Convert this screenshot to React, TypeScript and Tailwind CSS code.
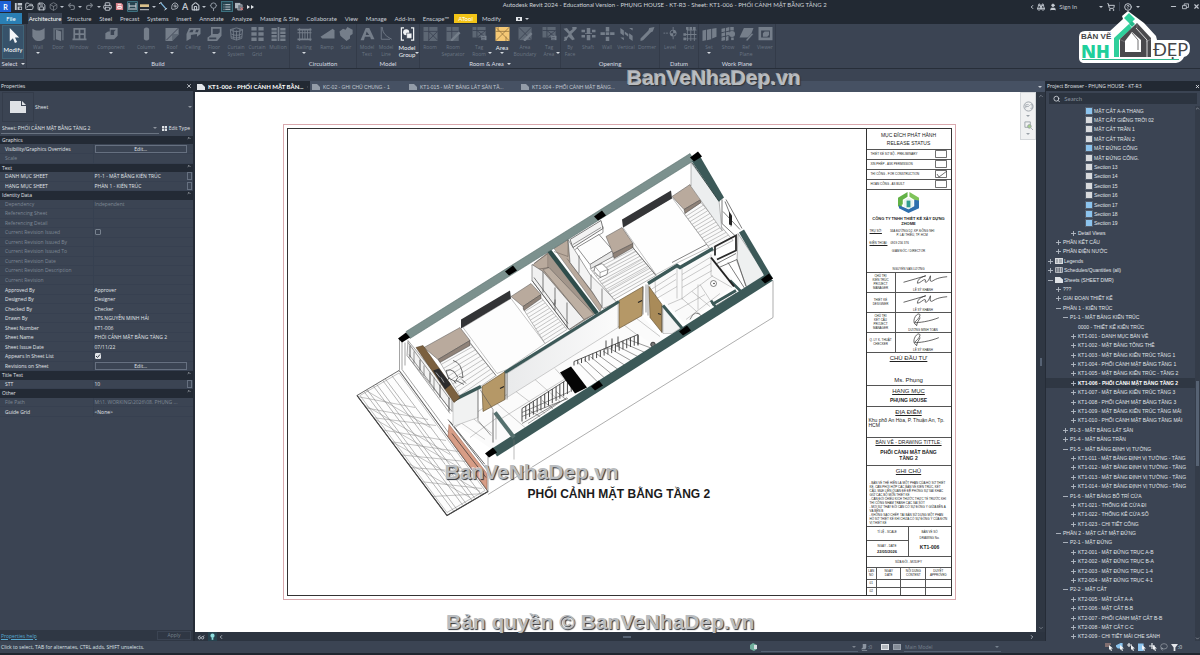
import React from "react";
import {
  Binoculars, Box, ChevronDown, ChevronLeft, ChevronRight, ChevronUp, CircleHelp, FolderOpen, House, Lasso, List,
  MapPin, Minus, Printer, Redo2, Save, Search, ShoppingCart, Undo2, User, X,
} from "lucide-react";

/* ---------- ribbon glyphs, 16x16 ---------- */
const G: Record<string, React.ReactNode> = {
  modify: <path d="M4 0v14l3.400-3.200L9.500 16l2.300-1-2.200-4.800H14z" fill="#f4f6f8" />,
  wall: <path d="M1 2c5 3 9 3 14-1v12c-4 4-9 4-12 1L1 11z" />,
  door: <><path d="M2 1h12v14h-2V3H4v12H2z" opacity=".6" /><path d="M5 3l6 2v11l-6-2z" /></>,
  window: <path fillRule="evenodd" d="M1 1h14v12h1v2H0v-2h1zM3 3v4h4V3zm6 0v4h4V3zM3 9v4h4V9zm6 0v4h4V9z" />,
  component: <path d="M6 1h9v9l-4 4H1V7l3-2h2zM7 3v6h4V5l2-2z" fillRule="evenodd" />,
  column: <path d="M5 2q3-3 6 0v12q-3 3-6 0z" />,
  roof: <><path d="M0 1h15v7H8v8H0z" /><path d="M15 1L1 15" stroke="#3b4453" /><path d="M8 8h8l-8 8z" opacity=".6" /></>,
  ceiling: <path fillRule="evenodd" d="M3 1h13v7l-4 3v-3L5 9v4l-5 3V8zM5 3L3 6h4l1-3zm6 0l-1 3h3l1-3z" />,
  floor: <path fillRule="evenodd" d="M4 0h12v10l-5 6H0v-4l4-3zM6 2v6h6l2-2V2zM2 12v2h8v-2z" />,
  csystem: <path d="M1 3l7-2 7 2-1 10-6 2-6-2zM1 3c4 3 10 3 14 0M4 2l1 12M8 4v11M12 2l-1 12M2 8c4 2 8 2 12 0M2 11c4 2 8 2 12 0" fill="none" stroke="currentColor" />,
  cgrid: <path d="M1 0h6v4H1zM9 0h6v4H9zM1 6h6v4H1zM9 6h6v4H9zM1 12h6v4H1zM9 12h6v4H9z" />,
  mullion: <path d="M0 1h6v3H0zM10 1h6v3h-6zM0 5h6v3H0zM10 5h6v3h-6zM0 9h6v3H0zM10 9h6v3h-6zM0 13h6v3H0zM10 13h6v3h-6zM7 0h2v16H7z" />,
  railing: <path d="M0 2h16v2H0zM0 6h16v1H0zM0 13h16v2H0zM2 1h1v15H2zM5 4h1v10H5zM8 4h1v10H8zM11 4h1v10h-1zM14 1h1v15h-1z" />,
  ramp: <path d="M0 11L14 2l2 2v9H2z" />,
  stair: <path d="M0 5l4-3 3 1 2-3 6 3v5l-3 2v3l-4 3-7-6z" />,
  mtext: <path fillRule="evenodd" d="M6 1h4l6 13h-4l-1-3H5l-1 4H0zM7 5L6 9h4z" />,
  mline: <path d="M2 0v14h10M3 0c1 8 4 10 11 14" fill="none" stroke="currentColor" />,
  mgroup: <><path d="M4 1H1v14h3M12 1h3v14h-3" fill="none" stroke="#f1f3f5" strokeWidth="1.4" /><circle cx="6.5" cy="6" r="3.5" fill="#f1f3f5" /><path d="M7 7h6v6H7z" fill="#f1f3f5" stroke="#3b4453" strokeWidth=".7" /></>,
  room: <><path d="M0 0h16v16H0z" opacity=".6" /><path d="M0 5h16M6 0v16M6 5l10 10M16 5L6 15" stroke="#3b4453" fill="none" /></>,
  roomsep: <><path d="M0 0h14v16H0z" opacity=".6" /><path d="M0 5h14M6 0v16" stroke="#3b4453" /><path d="M5 14l9-9 2 2-9 9H5z" /></>,
  tag: <><path d="M0 0h15v12H0z" opacity=".6" /><path d="M0 4h15M5 0v12M5 4l10 8M15 4L5 12" stroke="#3b4453" fill="none" /><path d="M10 10h6v5h-6z" /><path d="M11 12h3M11 14h3" stroke="#3b4453" strokeWidth=".6" /></>,
  area: <><path d="M0 0h16v16H0z" fill="#f5c875" /><path d="M0 0l16 16M16 0L0 16M0 5h16M3 0v5M12 11v5" stroke="#8b6b38" strokeWidth=".8" fill="none" /></>,
  boundary: <><path d="M0 0h15v15H0z" opacity=".6" /><path d="M0 0l15 15M15 0L0 15" stroke="#3b4453" /><path d="M6 14l8-8 2 2-8 8H6z" /></>,
  face: <path d="M0 2l4-1 3 4 5-4 3 1-6 6 4 6-3 1-4-4-4 5H0l6-8zM10 0h5v2h-5zM1 11h3v4H1z" />,
  shaft: <path d="M0 3h4v3H0zM6 1h4v6H6zM12 3h4v3h-4zM0 9h4v3H0zM6 9h4v6H6zM12 9h4v3h-4zM4 7h8v1H4z" />,
  owall: <path d="M6 0h4v5H6zM0 6h5v3H0zM6 6h4v3H6zM11 6h5v3h-5zM6 11h4v5H6z" />,
  vertical: <path d="M1 1l4 3v6L1 7zM6 5l4 3v3L6 8zM11 7l4 3v6l-4-3zM11 1h4v3zM1 12h4v3z" />,
  dormer: <path d="M0 13l9-9 1-3 6-1-2 5-2 1-9 9-3 1z" />,
  level: <><path d="M0 7h6" stroke="currentColor" strokeDasharray="2 1" /><circle cx="11" cy="7" r="3.5" fill="none" stroke="currentColor" /><path d="M11 3.500v7A3.500 3.500 0 0 1 7.500 7h7A3.500 3.500 0 0 0 11 3.500zM10.500 0h1v3h-1zM10.500 11h1v3h-1z" /></>,
  grid: <path d="M5 3h11v1H5zM3 8h13v1H3zM3 13h13v1H3zM5 4h1v12H5zM9 2h1v14H9zM13 2h1v14h-1zM1 7h3v3H1zM1 12h3v3H1zM4 0h3v3H4zM8 0h3v3H8zM12 0h3v3h-3z" />,
  set: <path d="M0 4l4-1v12l-4 1zM5 3l5-1v12l-5 1zM11 2l5-1v10l-5 2z" />,
  show: <><path d="M0 2l4-1v4L0 6zM5 1l4-1v4L5 5zM10 0h4v4h-4zM0 7l4-1v4l-4 1zM5 6l4-1v4l-4 1zM0 12l4-1v4l-4 1zM5 11l3-1v5l-3 1z" /><circle cx="12" cy="8" r="3.500" /><path d="M11 12h3v3h-3z" /></>,
  refp: <><path d="M5 1h11l-4 11H0z" /><path d="M7 15l7-8 2 1-7 8z" stroke="#3b4453" strokeWidth=".5" /></>,
  viewer: <path fillRule="evenodd" d="M0 0h16v15H0zM3 4v8h10V4zM5 7l2-2h5v4l-2 2H5z" />,
};

type Tool = { g: string; w: string; t: string[]; on?: boolean; arrow?: boolean };
type Panel = { name: string; menu?: boolean; tools: Tool[] };
const panels: Panel[] = [
  { name: "Build", tools: [
    { g: "wall", w: "w-[22px]", t: ["Wall"], arrow: true }, { g: "door", w: "w-[18px]", t: ["Door"] },
    { g: "window", w: "w-6", t: ["Window"] }, { g: "component", w: "w-10", t: ["Component"], arrow: true },
    { g: "column", w: "w-[30px]", t: ["Column"], arrow: true }, { g: "roof", w: "w-[22px]", t: ["Roof"], arrow: true },
    { g: "ceiling", w: "w-5", t: ["Ceiling"] }, { g: "floor", w: "w-[22px]", t: ["Floor"], arrow: true },
    { g: "csystem", w: "w-[22px]", t: ["Curtain", "System"] }, { g: "cgrid", w: "w-5", t: ["Curtain", "Grid"] },
    { g: "mullion", w: "w-[22px]", t: ["Mullion"] } ] },
  { name: "Circulation", tools: [
    { g: "railing", w: "w-7", t: ["Railing"], arrow: true }, { g: "ramp", w: "w-[18px]", t: ["Ramp"] },
    { g: "stair", w: "w-5", t: ["Stair"] } ] },
  { name: "Model", tools: [
    { g: "mtext", w: "w-5", t: ["Model", "Text"] }, { g: "mline", w: "w-[18px]", t: ["Model", "Line"] },
    { g: "mgroup", w: "w-6", t: ["Model", "Group"], on: true, arrow: true } ] },
  { name: "Room & Area", menu: true, tools: [
    { g: "room", w: "w-5", t: ["Room"] }, { g: "roomsep", w: "w-[26px]", t: ["Room", "Separator"] },
    { g: "tag", w: "w-[26px]", t: ["Tag", "Room"], arrow: true }, { g: "area", w: "w-5", t: ["Area"], on: true, arrow: true },
    { g: "boundary", w: "w-[26px]", t: ["Area", "Boundary"] }, { g: "tag", w: "w-[22px]", t: ["Tag", "Area"], arrow: true } ] },
  { name: "Opening", tools: [
    { g: "face", w: "w-[18px]", t: ["By", "Face"] }, { g: "shaft", w: "w-[18px]", t: ["Shaft"] },
    { g: "owall", w: "w-5", t: ["Wall"] }, { g: "vertical", w: "w-[18px]", t: ["Vertical"] },
    { g: "dormer", w: "w-6", t: ["Dormer"] } ] },
  { name: "Datum", tools: [
    { g: "level", w: "w-5", t: ["Level"] }, { g: "grid", w: "w-[18px]", t: ["Grid"] } ] },
  { name: "Work Plane", tools: [
    { g: "set", w: "w-5", t: ["Set"], arrow: true }, { g: "show", w: "w-[18px]", t: ["Show"] },
    { g: "refp", w: "w-[18px]", t: ["Ref", "Plane"] }, { g: "viewer", w: "w-5", t: ["Viewer"] } ] },
];

const Caret = ({ className = "" }: { className?: string }) => (
  <svg viewBox="0 0 4 2" className={"h-[2px] w-1 shrink-0 " + className} fill="currentColor"><path d="M0 0h4L2 2z" /></svg>
);

function ToolButton({ tool }: { tool: Tool }) {
  return (
    <button className={"relative flex flex-col items-center whitespace-nowrap leading-[7px] " + tool.w + (tool.on ? " text-[#eef1f4]" : " font-['Open_Sans',sans-serif] text-[5px] text-[#6a7482]")}>
      <svg viewBox="0 0 16 16" className="mb-[3px] h-[14px] w-[15px]" fill="#757e8a" color="#757e8a">{G[tool.g]}</svg>
      {tool.t.map((l) => <span key={l}>{l}</span>)}
      {tool.arrow && tool.t.length === 1 && <Caret className="mt-[1px] text-[#d5dae0]" />}
      {tool.arrow && tool.t.length > 1 && <Caret className="absolute right-0 bottom-[6px] text-[#d5dae0]" />}
    </button>
  );
}

function Ribbon() {
  return (
    <div className="flex h-[45px] shrink-0 border-b border-[#272e39] bg-[#3b4453]">
      <div className="flex w-[27px] shrink-0 flex-col items-center border-r border-[#333b49]">
        <button className="mt-[1px] flex h-[34px] w-[22px] flex-col items-center border border-[#3f6478] bg-[#37526a] pt-[2px] text-white">
          <svg viewBox="0 0 16 16" className="mb-[3px] h-[15px] w-[15px]">{G.modify}</svg>
          <span className="leading-[7px]">Modify</span>
        </button>
        <button className="flex items-center gap-[3px] leading-[9px] text-[#d9dde2]">Select <Caret /></button>
      </div>
      {panels.map((p) => (
        <div key={p.name} className="flex shrink-0 flex-col border-r border-[#333b49] pt-[3px]">
          <div className="flex h-[33px]">{p.tools.map((t, i) => <ToolButton key={i} tool={t} />)}</div>
          <div className="flex items-center justify-center gap-[3px] leading-[8px] text-[#d9dde2]">{p.name}{p.menu && <Caret />}</div>
        </div>
      ))}
    </div>
  );
}

const menuTabs = ["Structure", "Steel", "Precast", "Systems", "Insert", "Annotate", "Analyze", "Massing & Site", "Collaborate", "View", "Manage", "Add-Ins", "Enscape™"];

const Arr = () => <Caret className="text-[#b9c0c9]" />;

function TitleBar() {
  const s = "h-[9px] w-[9px] shrink-0";
  return (
    <header className="flex h-[13px] shrink-0 items-center justify-between bg-[#222933] text-[#c0c6ce]">
      <div className="flex w-[256px] items-center justify-between pr-[2px]">
        <span className="flex h-[11px] w-[11px] items-center justify-center bg-[#1f62d6] text-[7px] font-bold text-white">R</span>
        <svg viewBox="0 0 10 10" className={s} fill="#c0c6ce"><path fillRule="evenodd" d="M1 1h2v8H1zM4 1h5v3H4zM4 5h5v4H4zM6 6v2h2V6z" /></svg>
        <FolderOpen className={s} strokeWidth={2.5} /><Save className={s} strokeWidth={2.5} />
        <Box className={s + " opacity-60"} /><Arr />
        <Undo2 className={s + " opacity-50"} strokeWidth={3} /><Arr />
        <Redo2 className={s + " opacity-50"} strokeWidth={3} /><Arr />
        <Printer className={s} strokeWidth={2.5} />
        <svg viewBox="0 0 10 10" className={s}><path d="M1 1h6l2 2v6H1z" fill="#d9848b" /><path d="M3 3h4M3 5h4v2H3z" stroke="#fff" fill="none" /></svg>
        <svg viewBox="0 0 11 11" className="h-[11px] w-[11px]"><path d="M.5.500h10v10H.5z" fill="#27434f" stroke="#3d7180" /><path d="M2 2v7M9 2v7M2 5h7M3 8h5" stroke="#d9dde2" /></svg>
        <svg viewBox="0 0 10 8" className="h-[8px] w-[9px]"><path d="M0 1h10v3H0z" fill="#d9c08b" /><path d="M0 7h10" stroke="#d9dde2" /></svg><Arr />
        <svg viewBox="0 0 10 10" className={s}><path d="M2 1l6 7" stroke="#7fb8dd" strokeWidth="1.400" /><path d="M0 2l3-2M6 9l3-2" stroke="#d9dde2" /></svg>
        <MapPin className={s + " rotate-45"} />
        <span className="text-[9px] font-bold leading-[9px]">A</span>
        <House className={s} strokeWidth={3} /><Arr />
        <svg viewBox="0 0 10 10" className={s} fill="none" stroke="#9aa3ae"><circle cx="5" cy="4" r="3" /><path d="M5 7v3M1 4h1M8 4h1" /></svg>
        <span className="flex h-[11px] w-[12px] items-center justify-center border border-[#3d7180] bg-[#27434f]"><List className="h-[8px] w-[8px]" strokeWidth={3} /></span>
        <svg viewBox="0 0 10 10" className={s}><path d="M0 1h6v6H0z" fill="#aab1ba" /><path d="M3 3h5v6H3z" fill="#6d7682" stroke="#c9ced5" strokeWidth=".6" /><path d="M6 6l3 3M9 6L6 9" stroke="#e27070" /></svg>
        <svg viewBox="0 0 7 6" className="h-[6px] w-[7px] shrink-0" fill="#e3e6ea"><path d="M0 1l3 2-3 2zM4 1l3 2-3 2z" /></svg>
      </div>
      <h1 className="pb-[3px] pl-[44px] text-[#cfd4da]">Autodesk Revit 2024 - Educational Version - PHỤNG HOUSE - KT-R3 - Sheet: KT1-006 - PHỐI CẢNH MẶT BẰNG TẦNG 2</h1>
      <div className="flex items-center">
        <ChevronLeft className="h-[6px] w-[6px]" strokeWidth={4} />
        <Binoculars className="ml-[2px] h-[8px] w-[8px]" strokeWidth={3} />
        <button className="ml-[4px] flex items-center gap-[2px]"><User className="h-[8px] w-[8px]" fill="#c9ced5" />Sign In</button>
        <Caret className="ml-[22px]" /><ShoppingCart className="ml-[4px] h-[8px] w-[8px]" strokeWidth={3} />
        <span className="ml-[4px] h-[9px] w-px bg-[#3b4453]" />
        <CircleHelp className="ml-[4px] h-[8px] w-[8px]" strokeWidth={3} /><Caret className="ml-[4px]" />
        <button aria-label="Minimize" className="ml-[30px]"><Minus className="h-[7px] w-[7px]" strokeWidth={4} /></button>
        <button aria-label="Restore" className="ml-[5px]"><svg viewBox="0 0 8 8" className="h-[7px] w-[7px]" fill="none" stroke="currentColor"><path d="M.5 3h4.500v3.500H.5zM2.500 3V1h5v4H5" /></svg></button>
        <button aria-label="Close" className="ml-[4px]"><X className="h-[7px] w-[7px]" strokeWidth={4} /></button>
      </div>
    </header>
  );
}

function Brand() {
  return (
    <div className="absolute top-[10px] right-[10px] h-[54px] w-[112px]">
      <svg viewBox="1078 10 112 54" className="h-full w-full">
        <path d="M1128 11L1144 23 1156 36 1157 40 1184 40Q1190 41 1190 48 1190 56 1184 57 1182 62 1176 63H1083Q1079 62 1079 58V37Q1079 31 1085 31H1110L1123 19 1122 16z" fill="#fff" />
        <path d="M1114 57V38L1129 24 1132 28 1119 40V57z" fill="#2fcf9b" />
        <path d="M1124 18L1129 13 1135 19 1130 24z" fill="#2fcf9b" />
        <path d="M1129 24L1132 21 1135 24 1132 27z" fill="#27b98b" />
        <path d="M1120 57V39L1137 23 1151 38V57H1120z" fill="#4a4a4d" />
        <path d="M1120 39.500L1125 42M1151 39L1146 42M1137 23V28" stroke="#8a8a8d" strokeWidth=".6" />
        <path d="M1147 57V40L1136 28" fill="none" stroke="#fff" strokeWidth=".8" />
        <path d="M1125 52V41L1132 32 1141 40V52z" fill="#fff" />
        <path d="M1132 33l6 7V50" fill="none" stroke="#4a4a4d" strokeWidth=".8" />
        <path d="M1082 59.500h97" stroke="#2fb98d" />
      </svg>
      <span className="absolute top-[23px] left-[3px] font-['Liberation_Sans',sans-serif] text-[8px] font-bold leading-[8px] whitespace-nowrap text-[#454548]">BẢN VẼ</span>
      <span className="absolute top-[32px] left-[3px] font-['Open_Sans',sans-serif] text-[18px] font-extrabold leading-[18px] text-[#1fcf9b]">NH</span>
      <span className="absolute top-[30px] left-[75px] font-['Lato',sans-serif] text-[18px] leading-[18px] text-[#454548]">ĐẸP</span>
    </div>
  );
}

/* ---------- properties ---------- */
type Prop = { k: string; v?: string; kind?: "head" | "edit" | "check" | "side"; dim?: boolean; checked?: boolean };
const props: Prop[] = [
  { k: "Graphics", kind: "head" },
  { k: "Visibility/Graphics Overrides", kind: "edit" }, { k: "Scale", dim: true },
  { k: "Text", kind: "head" },
  { k: "DANH MỤC SHEET", v: "P1-1 - MẶT BẰNG KIẾN TRÚC", kind: "side" }, { k: "HẠNG MỤC SHEET", v: "PHẦN 1 - KIẾN TRÚC", kind: "side" },
  { k: "Identity Data", kind: "head" },
  { k: "Dependency", v: "Independent", dim: true }, { k: "Referencing Sheet", dim: true }, { k: "Referencing Detail", dim: true },
  { k: "Current Revision Issued", kind: "check", dim: true }, { k: "Current Revision Issued By", dim: true },
  { k: "Current Revision Issued To", dim: true }, { k: "Current Revision Date", dim: true },
  { k: "Current Revision Description", dim: true }, { k: "Current Revision", dim: true },
  { k: "Approved By", v: "Approver" }, { k: "Designed By", v: "Designer" }, { k: "Checked By", v: "Checker" },
  { k: "Drawn By", v: "KTS.NGUYỄN MINH HẢI" }, { k: "Sheet Number", v: "KT1-006" },
  { k: "Sheet Name", v: "PHỐI CẢNH MẶT BẰNG TẦNG 2" }, { k: "Sheet Issue Date", v: "07/11/22" },
  { k: "Appears In Sheet List", kind: "check", checked: true }, { k: "Revisions on Sheet", kind: "edit" },
  { k: "Title Text", kind: "head" }, { k: "STT", v: "10", kind: "side" },
  { k: "Other", kind: "head" }, { k: "File Path", v: "M:\\1. WORKING\\2026\\08. PHỤNG ...", dim: true }, { k: "Guide Grid", v: "<None>" },
];

function Properties() {
  return (
    <aside className="flex w-[195px] shrink-0 flex-col border-r-2 border-[#252c37] bg-[#3b4453] font-['Open_Sans','Noto_Sans',sans-serif] text-[5px] text-[#e0e4e9]">
      <div className="flex h-[10px] shrink-0 items-center justify-between bg-[#222933] px-[1px]">Properties<button aria-label="Close properties"><X className="h-[6px] w-[6px]" strokeWidth={3} /></button></div>
      <div className="flex h-[31px] shrink-0 items-center pr-[1px] pl-[2px]">
        <span className="flex h-[30px] w-[32px] items-center justify-center border border-[#343c4a]">
          <svg viewBox="0 0 16 12" className="h-[12px] w-4" fill="#dfe2e6"><path d="M0 0h11v5h5v7H0z" /><path d="M12 0l4 4h-4z" /></svg>
        </span>
        <span className="flex-1 pl-[1px]">Sheet</span><Caret className="opacity-50" />
      </div>
      <div className="mb-[2px] flex h-[12px] shrink-0 items-center justify-between pr-[3px] pl-[1px]">
        <label className="flex h-[11px] w-[158px] items-center border-b border-[#6a7482]">
          <select aria-label="Sheet instance" className="w-full appearance-none bg-transparent pl-[1px] outline-none"><option>Sheet: PHỐI CẢNH MẶT BẰNG TẦNG 2</option></select>
          <Caret className="mr-[2px] opacity-50" />
        </label>
        <button className="flex items-center gap-[2px] whitespace-nowrap"><svg viewBox="0 0 6 6" className="h-[5px] w-[5px]" fill="#dfe2e6"><path d="M0 0h2.600v2.600H0zM3.400 0H6v2.600H3.400zM0 3.400h2.600V6H0zM3.400 3.400H6V6H3.400z" /></svg>Edit Type</button>
      </div>
      <table className="h-[281px] w-full table-fixed border-collapse leading-[8px]">
        <colgroup><col className="w-[93px]" /><col /><col className="w-[6px]" /></colgroup>
        <tbody>
          {props.map((p) => p.kind === "head" ? (
            <tr key={p.k} className="bg-[#232a35]"><th colSpan={3} className="p-0 pl-[2px] text-left font-normal"><div className="flex justify-between pr-[2px]">{p.k}<ChevronUp className="h-[4px] w-[4px]" strokeWidth={4} /></div></th></tr>
          ) : (
            <tr key={p.k} className={"border-b border-[#374050] whitespace-nowrap " + (p.dim ? "text-[#7f8996]" : "")}>
              <th className="border-r border-[#364050] p-0 pl-[5px] text-left font-normal">{p.k}</th>
              <td className="overflow-hidden p-0 pl-[1px]">
                {p.kind === "edit" ? <button className="block h-[8px] w-full border border-[#667080] text-center leading-[6px]">Edit...</button>
                  : p.kind === "check" ? (
                    <label className="relative block h-[6px] w-[6px]">
                      <input type="checkbox" aria-label={p.k} defaultChecked={p.checked} className="peer block h-[6px] w-[6px] appearance-none rounded-[1px] border border-[#77818e] checked:border-[#e0e3e7] checked:bg-[#e0e3e7]" />
                      <svg viewBox="0 0 6 6" className="pointer-events-none absolute inset-0 hidden h-[6px] w-[6px] peer-checked:block" fill="none" stroke="#2f3743"><path d="M1 3l1.500 1.500L5 1.500" /></svg>
                    </label>
                  ) : p.v}
              </td>
              <td className="p-0">{p.kind === "side" && <span className="block h-[8px] w-[5px] border border-[#667080]" />}</td>
            </tr>
          ))}
        </tbody>
      </table>
      <div className="flex-1" />
      <div className="flex h-[11px] shrink-0 items-center justify-between bg-[#2f3744] pr-[2px] pl-[1px]">
        <a href="#help" className="text-[#58a9d0] underline">Properties help</a>
        <button className="h-[9px] w-[34px] border border-[#3b4453] leading-[7px] text-[#77818e]">Apply</button>
      </div>
    </aside>
  );
}

/* ---------- project browser ---------- */
type Node = [level: number, sign: string, text: string, icon?: string];
const tree: Node[] = [
  [4, "", "MẶT CẮT A-A THANG", "b"], [4, "", "MẶT CẮT GIẾNG TRỜI 02", "w"], [4, "", "MẶT CẮT TRẦN 1", "w"], [4, "", "MẶT CẮT TRẦN 2", "w"],
  [4, "", "MẶT ĐỨNG CỔNG", "b"], [4, "", "MẶT ĐỨNG CỔNG.", "w"], [4, "", "Section 13", "w"], [4, "", "Section 14", "w"], [4, "", "Section 15", "w"],
  [4, "", "Section 16", "w"], [4, "", "Section 17", "b"], [4, "", "Section 18", "b"], [4, "", "Section 19", "b"],
  [3, "+", "Detail Views"], [1, "+", "PHẦN KẾT CẤU"], [1, "+", "PHẦN ĐIỆN NƯỚC"],
  [0, "+", "Legends", "l"], [0, "+", "Schedules/Quantities (all)", "s"], [0, "−", "Sheets (SHEET DMR)", "p"],
  [1, "+", "???"], [1, "+", "GIAI ĐOẠN THIẾT KẾ"], [1, "−", "PHẦN 1 - KIẾN TRÚC"], [2, "−", "P1-1 - MẶT BẰNG KIẾN TRÚC"],
  [3, "", "0000 - THIẾT KẾ KIẾN TRÚC"], [3, "+", "KT1-001 - DANH MỤC BẢN VẼ"], [3, "+", "KT1-002 - MẶT BẰNG TỔNG THỂ"],
  [3, "+", "KT1-003 - MẶT BẰNG KIẾN TRÚC TẦNG 1"], [3, "+", "KT1-004 - PHỐI CẢNH MẶT BẰNG TẦNG 1"],
  [3, "+", "KT1-005 - MẶT BẰNG KIẾN TRÚC - TẦNG 2"], [3, "+", "KT1-006 - PHỐI CẢNH MẶT BẰNG TẦNG 2"],
  [3, "+", "KT1-007 - MẶT BẰNG KIẾN TRÚC TẦNG 3"], [3, "+", "KT1-008 - PHỐI CẢNH MẶT BẰNG TẦNG 3"],
  [3, "+", "KT1-009 - MẶT BẰNG KIẾN TRÚC TẦNG MÁI"], [3, "+", "KT1-010 - PHỐI CẢNH MẶT BẰNG TẦNG MÁI"],
  [2, "+", "P1-3 - MẶT BẰNG LÁT SÀN"], [2, "+", "P1-4 - MẶT BẰNG TRẦN"], [2, "−", "P1-5 - MẶT BẰNG ĐỊNH VỊ TƯỜNG"],
  [3, "+", "KT1-011 - MẶT BẰNG ĐỊNH VỊ TƯỜNG - TẦNG"], [3, "+", "KT1-012 - MẶT BẰNG ĐỊNH VỊ TƯỜNG - TẦNG"],
  [3, "+", "KT1-013 - MẶT BẰNG ĐỊNH VỊ TƯỜNG - TẦNG"], [3, "+", "KT1-014 - MẶT BẰNG ĐỊNH VỊ TƯỜNG - TẦNG"],
  [2, "−", "P1-6 - MẶT BẰNG BỐ TRÍ CỬA"], [3, "+", "KT1-021 - THỐNG KÊ CỬA ĐI"], [3, "+", "KT1-022 - THỐNG KÊ CỬA SỔ"], [3, "+", "KT1-023 - CHI TIẾT CỔNG"],
  [1, "−", "PHẦN 2 - MẶT CẮT MẶT ĐỨNG"], [2, "−", "P2-1 - MẶT ĐỨNG"],
  [3, "+", "KT2-001 - MẶT ĐỨNG TRỤC A-B"], [3, "+", "KT2-002 - MẶT ĐỨNG TRỤC B-A"], [3, "+", "KT2-003 - MẶT ĐỨNG TRỤC 1-4"], [3, "+", "KT2-004 - MẶT ĐỨNG TRỤC 4-1"],
  [2, "−", "P2-2 - MẶT CẮT"], [3, "+", "KT2-005 - MẶT CẮT A-A"], [3, "+", "KT2-006 - MẶT CẮT B-B"], [3, "+", "KT2-007 - PHỐI CẢNH MẶT CẮT B-B"],
  [3, "+", "KT2-008 - MẶT CẮT C-C"], [3, "+", "KT2-009 - CHI TIẾT MÁI CHE SẢNH"],
];
const indent = ["pl-0", "pl-[8px]", "pl-[15px]", "pl-[23px]", "pl-[39px]"];

function NodeIcon({ kind }: { kind: string }) {
  const c = "h-[8px] w-[8px] shrink-0";
  if (kind === "b" || kind === "w") return <svg viewBox="0 0 8 8" className={c}><path d="M.5.500h7v7h-7z" fill="none" stroke="#6f7986" strokeDasharray="1 1" /><path d="M1 1h6v6H1z" fill={kind === "b" ? "#8cc4ee" : "#d8dadd"} /></svg>;
  if (kind === "l") return <svg viewBox="0 0 8 8" className={c}><path d="M0 1h8v6H0z" fill="#d8dadd" /><path d="M1 3h2M4 3h3M1 5h2M4 5h3" stroke="#5a6472" strokeWidth=".8" /></svg>;
  if (kind === "s") return <svg viewBox="0 0 8 8" className={c}><path d="M.5 1.500h7v5h-7zM.5 3h7M.5 5h7M3 1v6M5.500 1v6" stroke="#d8dadd" strokeWidth=".7" fill="none" /></svg>;
  return <svg viewBox="0 0 8 8" className={c} fill="#dfe2e6"><path d="M0 1h5l3 2.500V7H0z" /></svg>;
}

function Sign({ kind }: { kind: string }) {
  return (
    <svg viewBox="0 0 8 8" className="h-[8px] w-[8px] shrink-0" stroke="#b4bbc5" strokeWidth=".9">
      {kind && <path d={kind === "+" ? "M2 4.500h5M4.500 2v5" : "M2 4.500h5"} />}
    </svg>
  );
}

function Browser() {
  return (
    <aside className="flex w-[155px] shrink-0 flex-col border-l border-[#252c37] bg-[#3b4453] text-[#e0e4e9]">
      <div className="flex h-[10px] shrink-0 items-center justify-between overflow-hidden bg-[#222933] pl-[1px] font-['Open_Sans',sans-serif] text-[5px] whitespace-nowrap">Project Browser - PHỤNG HOUSE - KT-R3<button aria-label="Close browser"><X className="h-[5px] w-[5px]" strokeWidth={4} /></button></div>
      <label className="mx-[3px] my-[2px] flex h-[11px] shrink-0 items-center gap-[4px] bg-[#2c3440] px-[4px]">
        <Search className="h-[8px] w-[8px]" strokeWidth={2.5} /><input aria-label="Search" placeholder="Search" className="w-full bg-transparent outline-none placeholder:text-[#8b94a0]" />
      </label>
      <div className="flex min-h-0 flex-1">
        <ul className="grid min-w-0 flex-1 auto-rows-fr overflow-hidden font-['Liberation_Sans',sans-serif] text-[5px]">
          {tree.map(([lv, sign, text, icon], i) => (
            <li key={i} className={"flex min-h-0 items-center gap-[1px] overflow-hidden leading-[8px] whitespace-nowrap " + indent[lv] + (i === 29 ? " bg-[#2f3743] font-bold text-white" : "")}>
              {lv < 4 && <Sign kind={sign} />}
              {icon && <NodeIcon kind={icon} />}
              <span>{text}</span>
            </li>
          ))}
        </ul>
        <div className="flex w-[5px] shrink-0 flex-col items-center justify-between bg-[#343c49]">
          <ChevronUp className="h-[5px] w-[5px]" /><span className="mt-[100px] h-[85px] w-[3px] bg-[#566273]" /><ChevronDown className="h-[5px] w-[5px]" />
        </div>
      </div>
    </aside>
  );
}

/* ---------- axonometric floor plan, drawn in sheet coordinates ---------- */
type P = [number, number];
const lerp = (a: P, b: P, t: number): P => [a[0] + (b[0] - a[0]) * t, a[1] + (b[1] - a[1]) * t];
const pts = (...p: P[]) => p.map((q) => q.join(",")).join(" ");
/* rulings across a quad a-b-c-d: n lines parallel to a-b */
function Rules({ q, n, stroke = "#a9a9a9", w = 0.5 }: { q: [P, P, P, P]; n: number; stroke?: string; w?: number }) {
  const d = Array.from({ length: n }, (_, i) => {
    const t = (i + 1) / (n + 1);
    return `M${lerp(q[0], q[3], t).join(" ")}L${lerp(q[1], q[2], t).join(" ")}`;
  }).join("");
  return <path d={d} stroke={stroke} strokeWidth={w} fill="none" />;
}
function Floor({ q, n }: { q: [P, P, P, P]; n: number }) {
  return <g><polygon points={pts(...q)} fill="#fafafa" stroke="#777" strokeWidth=".5" /><Rules q={q} n={n} stroke="#8c8c8c" /></g>;
}
function Rail({ a, b, h1, h2, n }: { a: P; b: P; h1: number; h2: number; n: number }) {
  const d = Array.from({ length: n }, (_, i) => {
    const t = i / (n - 1), p = lerp(a, b, t), h = h1 + (h2 - h1) * t;
    return `M${p[0]} ${p[1]}V${p[1] - h}`;
  }).join("");
  return <g stroke="#333" fill="none"><path d={d} strokeWidth=".9" /><path d={`M${a[0]} ${a[1] - h1}L${b[0]} ${b[1] - h2}`} strokeWidth=".8" /></g>;
}

function HousePlan() {
  const dark = "#3c5958", light = "#7c918e", tan = "#b9aa9d", line = "#444";
  const deck: [P, P, P, P] = [[357, 396], [399, 371], [488, 492], [447, 516]];
  return (
    <svg viewBox="288 130 578 465" className="h-full w-full" aria-label="Phối cảnh mặt bằng tầng 2">
      <defs>
        <linearGradient id="face" x1="0" x2="1"><stop offset="0" stopColor="#e9eaeb" /><stop offset="1" stopColor="#fbfbfb" /></linearGradient>
        <clipPath id="deckclip"><polygon points={pts(...deck)} /></clipPath>
      </defs>
      <path d="M773 281V318L488 495" fill="none" stroke="#777" strokeWidth=".6" />

      {/* glass canopy */}
      <polygon points={pts(...deck)} fill="#fdfdfd" stroke="#444" strokeWidth=".8" />
      <polygon points="360,396 399,373.500 485,491 447,513" fill="none" stroke="#888" strokeWidth=".5" />
      <g clipPath="url(#deckclip)">
        <path d="M364 392L454 512M367 390L457 510M373 386L463 506M376 384L466 504M382 380L472 501M385 379L475 499M391 375L481 495" stroke="#888" strokeWidth=".6" />
        <path d="M357 397L415 408M364 408L428 420M372 418L436 426M380 430L446 441M390 442L458 452M397 455L466 462M410 468L478 473M420 482L482 489M432 497L486 494M366 391L430 428M362 404L450 455M372 418L470 474M388 440L480 492M405 462L470 498" stroke="#888" strokeWidth=".5" />
      </g>
      <path d="M357 396L447 516 488 492" fill="none" stroke="#444" strokeWidth="1.200" />

      {/* slab */}
      <polygon points="399,340 696,160 726,201 742,233 768,281 488,456 399,371" fill="#fff" />
      <path d="M399.500 339V371L488 492V456M402 342V370L486 484M405 343V366M408 357L450 414" fill="none" stroke="#666" strokeWidth=".6" />
      <polygon points="449,425 487,474 487,490 448,437" fill="#d79d86" stroke="#8d5b47" strokeWidth=".5" />
      <path d="M452 434L486 478M450 422L485 465M448 420L486 469" stroke="#333" strokeWidth=".7" />

      {/* corridor floor tiles */}
      <polygon points="507,398 640,314 668,345 640,352 528,424 492,450 452,422 476,406 484,414" fill="#fbfbfb" />
      <path d="M484 409L640 314M500 420L620 345M497 404L525 428M516 392L545 414M535 380L560 402M555 369L572 388M622 324L650 345M634 317L660 337M462 424L485 440M472 418L492 434M455 428L484 408M470 438L500 416" stroke="#999" strokeWidth=".5" />

      {/* left bedroom */}
      <Floor q={[[439, 361], [470, 344], [496, 376], [462, 400]]} n={9} />
      <polygon points="424,348 460,328 470,341 438,360" fill={tan} stroke="#555" strokeWidth=".5" />
      <path d="M438 360L470 341V346L440 363z" fill="#8f8278" stroke="#333" strokeWidth=".4" />
      <polygon points="463,328 511,299 545,344 507,370 497,374" fill="#fdfdfd" stroke="#888" strokeWidth=".5" />
      <path d="M470 343L496 376" stroke="#555" strokeWidth=".6" />
      <polygon points="461,320 510,291 511,299 461,329" fill="#333436" />
      <Floor q={[[523, 309], [541, 298], [567, 330], [545, 344]]} n={11} />
      <polygon points="511,297 531,284 541,295 523,307" fill={tan} stroke="#555" strokeWidth=".5" />
      <path d="M523 307L541 295V299L524 311z" fill="#8f8278" stroke="#333" strokeWidth=".4" />

      {/* wardrobes and party wall */}
      <polygon points="532,266 549,252 597,313 570,330 557,299" fill={tan} stroke="#666" strokeWidth=".5" />
      <polygon points="549,254 595,313 589,317 549,272" fill="#a3968b" />
      <path d="M534 264L548 254V271M549 271L588 318M536 270L549 268" stroke="#665d55" strokeWidth=".6" fill="none" />
      <polygon points="532,265 543,272 584,320 569,330 532,281" fill="#f1f1f1" stroke={line} strokeWidth=".5" />
      <polygon points="543,270 549,268 594,315 584,320" fill="#bdafa2" stroke={line} strokeWidth=".4" />
      <path d="M532 281L569 330M543 272V293M555 288V311M567 303V328M534 278L568 324M555 300V305M554 303V306" stroke={line} strokeWidth=".7" />
      <polygon points="554,249 568,240 570,256 604,302 600,312" fill={tan} stroke="#666" strokeWidth=".5" />
      <path d="M568 241V257L554 252M567 259L602 306" stroke="#665d55" strokeWidth=".5" fill="none" />
      <polygon points="568,240 580,259 590,275 602,287 617,303 603,309 592,292 570,263" fill="#f4f4f4" stroke={line} strokeWidth=".5" />
      <path d="M579 256V274M591 275V290M602 289V307" stroke={line} strokeWidth=".6" />
      <path d="M549 251L597 314" stroke="#2f4d4b" strokeWidth="4.500" />

      {/* right bedroom */}
      <Floor q={[[590, 269], [632, 247], [656, 276], [614, 300]]} n={11} />
      <path d="M600 285L642 260M606 292L648 268M596 275L636 251" stroke="#aaa" strokeWidth=".5" />
      <polygon points="570,240 601,221 603,229 573,248" fill="#f3f3f3" stroke="#444" strokeWidth=".7" />
      <path d="M573 245L601 228M575 250L603 233V227" stroke="#555" strokeWidth=".6" fill="none" />
      <polygon points="577,248 599,235 613,251 590,265" fill="#fdfdfd" stroke="#444" strokeWidth=".6" />
      <path d="M590 265L613 251V257L591 269z" fill="#e8e8e8" stroke="#444" strokeWidth=".5" />
      <path d="M595 267l7-3 6 6-1 5-7 3-6-6z" fill="#fff" stroke="#444" strokeWidth=".6" /><path d="M595 267l5 6 8-3M600 273v5" stroke="#555" strokeWidth=".5" fill="none" />
      <polygon points="606,237 622,228 633,244 613,254" fill={tan} stroke="#555" strokeWidth=".5" />
      <path d="M613 254L633 244V248L614 259z" fill="#8f8278" stroke="#333" strokeWidth=".4" />
      <polygon points="623,228 672,198 709,248 680,262 656,275" fill="#fefefe" stroke="#888" strokeWidth=".5" />
      <path d="M632 247L656 276M672 263L712 242" stroke="#666" strokeWidth=".8" />
      <polygon points="622,220 671,191 672,199 623,228" fill="#343537" />
      <Floor q={[[684, 214], [701, 203], [733, 241], [712, 252]]} n={13} />
      <polygon points="672,197 690,185 701,200 684,210" fill={tan} stroke="#555" strokeWidth=".5" />
      <path d="M684 210L701 200V203L685 214z" fill="#8f8278" stroke="#333" strokeWidth=".4" />
      <polygon points="691,163 719,201 722,231 691,187" fill="#eceeef" stroke="#777" strokeWidth=".5" />

      {/* bathroom */}
      <polygon points="649,284 677,267 713,252 735,284 686,325 668,306" fill="#fafafa" />
      <path d="M650 286V302M655 281L656 300M677 266V299M682 269V300M651 290L676 274M652 295L676 280M655 300L677 287M682 275L710 258M682 281L711 264M682 288L712 271M668 305L682 299 713 276M686 320L720 294M675 312L705 295M682 299L700 315M692 292L710 307M711 255V276L732 288M700 285L711 302M698 285V310" stroke="#999" strokeWidth=".5" fill="none" />
      <circle cx="713.500" cy="284" r="3" fill="#fff" stroke="#333" strokeWidth=".6" /><circle cx="714" cy="284" r=".7" />
      <path d="M690 320q5-12 13-2" fill="none" stroke="#333" strokeWidth=".6" />
      <path d="M712 305L736 291" stroke={dark} strokeWidth="3" />
      <path d="M711 301L719 312M730 281L742 293" stroke={dark} strokeWidth="2.600" />
      <path d="M711 258L734 287" stroke="#222" strokeWidth="2" />
      <path d="M716 306L736 294V298L720 309z" fill="#fff" stroke="#444" strokeWidth=".5" />

      {/* rear windows */}
      <polygon points="738,234 766,276 748,291 737,262" fill="#eef0f0" stroke="#666" strokeWidth=".5" />
      <path d="M717 260L736 251V236L715 247V256" fill="none" stroke="#2b2b2b" strokeWidth="1.800" />
      <path d="M717 264L736 254M719 268L737 260 746 287M728 263L746 291M722 200V224L736 237M725 202L731 217V227M723 212L740 230M726 200L742 229" stroke="#444" strokeWidth=".7" fill="none" />
      <path d="M729 212v13l3 1v-10z" fill="#222" />

      {/* corridor wall face and doors */}
      <polygon points="507,374 618,304 618,328 507,398" fill="url(#face)" stroke="#888" strokeWidth=".4" />
      <polygon points="453,402 478,388 478,418 453,427" fill="#f1f2f2" stroke="#888" strokeWidth=".4" />
      <polygon points="482,387 505,372 505,400 483,412" fill="#b59867" stroke="#5c4a2c" strokeWidth=".6" />
      <polygon points="619,301 643,287 642,316 619,329" fill="#b59867" stroke="#5c4a2c" strokeWidth=".6" />
      <polygon points="649,287 662,305 662,333 650,318" fill="#a98b59" stroke="#5c4a2c" strokeWidth=".6" />
      <path d="M638 303l4-2M658 314l3 1M500 389l4-2" stroke="#222" strokeWidth="1.200" />
      <path d="M643 287V315M646 285V313M648 285V316M505 372V400M507 372V400M662 306V333M480 390L493 410V443M478 390V421L491 436" stroke="#555" strokeWidth=".6" fill="none" />
      <polygon points="663,306 681,328 672,334 663,334" fill="#f2f3f3" stroke="#888" strokeWidth=".4" />
      <path d="M505 373L619 302" stroke={dark} strokeWidth="3" />
      <path d="M648 284L677 266 680 268 713 249" fill="none" stroke={dark} strokeWidth="3.400" />
      <path d="M663 306L684 331" stroke={dark} strokeWidth="3" />
      <path d="M453 401L481 387" stroke={dark} strokeWidth="3.400" />

      {/* desk, hob, chair and front windows */}
      <polygon points="408,341 452,395 452,412 407,356" fill="#f3f3f3" stroke="#555" strokeWidth=".5" />
      <path d="M410 346V358M420 360V371M430 373V383M440 385V398M449 398V412" stroke="#777" strokeWidth="1.200" />
      <path d="M408 343L450 400M409 355L450 410M414 352V364M424 366V376M434 378V391" stroke="#555" strokeWidth=".6" />
      <polygon points="416,348 423,346 460,398 454,403" fill="#7b603f" stroke="#4b3922" strokeWidth=".5" />
      <polygon points="433,371 439,369 451,385 445,390" fill="#2b2b2d" /><path d="M436 373l4 5M441 378l3 5" stroke="#bbb" strokeWidth=".8" />
      <path d="M446 371q4-2 8 1l4 6-3 4-7-4zM453 361q9 2 10 17l-4-1M449 378l-3 6M456 381l8 4M462 380l4 4M454 381l2 3" fill="none" stroke="#333" strokeWidth=".7" />

      {/* stairs */}
      <polygon points="572,368 640,336 660,350 600,386 586,388" fill="#fdfdfd" />
      <Rules q={[[572, 366], [592, 388], [660, 345], [634, 337]]} n={9} stroke="#555" w={0.6} />
      <path d="M528 424L567 398M540 417L528 410M553 409L542 401M566 400L556 392" stroke="#666" strokeWidth=".6" />
      <Rail a={[522, 422]} b={[575, 390]} h1={13} h2={15} n={15} />
      <path d="M522 417L568 399M522 413L570 392M522 424L560 402" stroke="#444" strokeWidth=".6" />
      <Rail a={[574, 366]} b={[638, 345]} h1={4} h2={10} n={18} />
      <path d="M606 350V341M612 349V339M618 347V337M638 336V346" stroke="#222" strokeWidth=".8" />
      <polygon points="560,373 571,367 587,388 575,394" fill="#050505" />
      <circle cx="653" cy="345" r="2.300" fill="#777" stroke="#222" strokeWidth=".8" />

      {/* cut walls */}
      <polygon points="406,332 690,154 694,161 410,339" fill={light} stroke="#4f6462" strokeWidth=".5" />
      <polygon points="692,162 699,155 724,198 719,202" fill={dark} />
      <path d="M692 163L719 202" stroke="#1f3533" strokeWidth=".8" />
      <polygon points="739,233 744,230 773,279 767,281" fill={dark} />
      <polygon points="492,449 765,275 773,281 497,457" fill={dark} />
      <path d="M495 413L514 438" stroke="#55706e" strokeWidth="4" /><path d="M493 413V443M496 416V440M514 440V460" stroke="#777" strokeWidth=".5" />
      {[[404, 338], [511, 271], [600, 216], [696, 157], [767, 279], [685, 331], [597, 386], [491, 453]].map(([x, y]) => (
        <polygon key={x} points={pts([x - 6, y + 1], [x + 2, y - 5], [x + 6, y], [x - 2, y + 5])} fill="#000" />
      ))}
    </svg>
  );
}

/* ---------- title block ---------- */
const Scribble = ({ flip }: { flip?: boolean }) => (
  <svg viewBox="0 0 50 14" className="h-[13px] w-[50px]" fill="none" stroke="#333" strokeWidth=".8">
    {flip ? <path d="M18 13c-6-2-1-13 3-12 3 2-4 8-5 9s14 0 26-5M22 5q-4 6-4 9" /> : <path d="M4 10q14-4 24-7c-7 2-9 5-9 8 3 0 6-4 8-4s-1 3 1 3 4-4 5-7c0 4-1 6 1 6s4-4 17-5" />}
  </svg>
);
const Signature = ({ role, name, flip }: { role: string[]; name: string; flip?: boolean }) => (
  <div className="flex h-5 border-b border-[#555]">
    <div className="flex w-[29px] flex-col justify-center border-r border-[#555] text-center">{role.map((r, i) => <span key={i}>{r}</span>)}</div>
    <div className="flex flex-1 flex-col items-center justify-between"><Scribble flip={flip} /><span>{name}</span></div>
  </div>
);

function TitleBlock() {
  const head = "text-center text-[6px] leading-[7px] underline";
  return (
    <div className="flex w-[85px] shrink-0 flex-col border-l border-[#333] text-[3px] leading-[4px] text-[#222]">
      <div className="flex h-[21px] flex-col justify-center border-b border-[#555] text-center text-[5px] leading-[8px]"><span>MỤC ĐÍCH PHÁT HÀNH</span><span>RELEASE STATUS</span></div>
      {["THIẾT KẾ SƠ BỘ - PRELIMINARY", "XIN PHÉP - ASK PERMISSION", "THI CÔNG - FOR CONSTRUCTION", "HOÀN CÔNG - AS BUILT"].map((t, i) => (
        <div key={t} className="flex h-[10px] items-center justify-between border-b border-[#555] px-[4px]">
          <span>{t}</span><svg viewBox="0 0 12 8" className="h-[8px] w-[12px]" fill="none" stroke="#333" strokeWidth=".7"><path d="M.5.500h11v7H.5z" />{i === 2 && <path d="M2 4l2 3 8-6" />}</svg>
        </div>
      ))}
      <div className="flex h-[83px] flex-col items-center border-b border-[#555] pt-[2px]">
        <svg viewBox="0 0 24 22" className="h-[21px] w-[23px]"><path d="M11 0v5L6 8v5H5v4l-4-2V6z" fill="#62b246" /><path d="M13 0l10 6v4l-5-2-5-3z" fill="#7fc45a" /><path d="M23 9v8l-11 5-10-5v-3l10 4 6-3V8z" fill="#2f6fad" /><path d="M7 9l5-3 5 3v6l-5 3-5-3z" fill="#e9f3ee" /><path d="M10 9h4v7h-4z" fill="#2e9c8f" /></svg>
        <b className="mt-[3px] text-center text-[4px] leading-[5px] whitespace-nowrap">CÔNG TY TNHH THIẾT KẾ XÂY DỰNG<br />ZHOME</b>
        <div className="mt-[3px] flex w-full gap-[8px] pl-[3px]"><u>TRỤ SỞ:</u><span className="text-center">34A ĐƯỜNG D2, KP. ĐÔNG NHÌ<br />P. LÁI THIÊU, TP. HCM</span></div>
        <div className="mt-[4px] flex w-full gap-[3px] pl-[3px]"><u>ĐIỆN THOẠI:</u><span>0919 256 376</span></div>
        <span className="mt-[4px]">GIÁM ĐỐC / DIRECTOR</span>
        <span className="mt-[14px]">NGUYỄN VĂN LƯƠNG</span>
      </div>
      <Signature role={["CHỦ TRÌ", "KIẾN TRÚC", "PROJECT", "MANAGER"]} name="LÊ SỸ KHÁNH" />
      <Signature role={["THIẾT KẾ", "DESIGNER"]} name="LÊ SỸ KHÁNH" />
      <Signature role={["CHỦ TRÌ", "KẾT CẤU", "PROJECT", "MANAGER"]} name="DƯƠNG MINH TOÀN" flip />
      <Signature role={["Q. LÝ K. THUẬT", "CHECKER"]} name="LÊ SỸ KHÁNH" flip />
      <div className="flex h-[34px] flex-col items-center justify-between border-b border-[#555] pt-[2px] pb-[1px]"><span className={head}>CHỦ ĐẦU TƯ</span><span className="text-[6px] leading-[7px]">Ms. Phụng</span></div>
      <div className="h-[21px] border-b border-[#555] pt-[2px] text-center"><p className={head}>HẠNG MỤC</p><b className="block pt-[2px] text-[5px] leading-[7px]">PHỤNG HOUSE</b></div>
      <div className="h-[31px] border-b border-[#555] px-[2px] pt-[2px]"><p className={head}>ĐỊA ĐIỂM</p><p className="pt-[2px] text-[5px] leading-[5px]">Khu phố An Hòa, P. Thuận An, Tp. HCM</p></div>
      <div className="h-[28px] border-b border-[#555] pt-[1px] text-center"><p className="text-[5px] leading-[7px] underline">BẢN VẼ - DRAWING TITTLE:</p><b className="block px-[8px] pt-[3px] text-[5px] leading-[6px]">PHỐI CẢNH MẶT BẰNG TẦNG 2</b></div>
      <div className="h-[61px] border-b border-[#555] px-[3px] pt-[2px]">
        <p className={head}>GHI CHÚ</p>
        <p className="pt-[6px]">- BẢN VẼ THỂ HIỆN LÀ MỘT PHẦN CỦA HỒ SƠ THIẾT KẾ, CẦN PHỐI HỢP CÁC BẢN VẼ KIẾN TRÚC, KẾT CẤU, M&amp;E LIÊN QUAN ĐỂ ĐỀ PHÒNG SỰ SAI KHÁC GIỮ CÁC BỘ MÔN THIẾT KẾ</p>
        <p>- CẦN ĐỐI CHIẾU KÍCH THƯỚC THỰC TẾ TRƯỚC KHI THI CÔNG NHẰM TRÁNH CÁC SAI SÓT</p>
        <p>- MỌI SỰ THAY ĐỔI CẦN CÓ SỰ ĐỒNG Ý GIỮA BÊN A VÀ BÊN B</p>
        <p>- KHÔNG SAO CHÉP, TÁI BẢN SỬ DỤNG MỘT PHẦN HỒ SƠ THIẾT KẾ KHI CHƯA CÓ SỰ ĐỒNG Ý CỦA ĐƠN VỊ THIẾT KẾ</p>
      </div>
      <div className="flex h-[30px] border-b border-[#555] text-center">
        <div className="w-[42px] border-r border-[#555]"><p className="h-[14px] border-b border-[#555] pt-[3px]">TỈ LỆ - SCALE</p><p className="pt-[3px]">NGÀY - DATE</p><b className="block pt-[2px] text-[4px]">22/05/2026</b></div>
        <div className="flex-1 pt-[3px]"><p>BẢN VẼ SỐ</p><p className="pt-[2px]">DRAWING No.</p><b className="block pt-[4px] text-[5px] leading-[6px]">KT1-006</b></div>
      </div>
      <p className="h-[11px] border-b border-[#555] pt-[3px] text-center">SỬA ĐỔI - MODIFY</p>
      <table className="flex-1 border-collapse text-center">
        <tbody>
          <tr className="h-[11px]">{["LẦN\nNO", "NGÀY\nDATE", "NỘI DUNG\nCONTENT", "DUYỆT\nAPPROVED"].map((t, i) => <th key={t} className={"border-b border-[#555] p-0 font-normal whitespace-pre " + (i ? "w-[25px] " : "w-[10px] ") + (i < 3 ? "border-r" : "")}>{t}</th>)}</tr>
          {["01", "02"].map((n, i) => <tr key={n} className={"h-[8px] border-[#555] " + (i ? "" : "border-b")}><td className="border-r border-[#555] p-0">{n}</td><td className="border-r border-[#555]" /><td className="border-r border-[#555]" /><td /></tr>)}
        </tbody>
      </table>
    </div>
  );
}

const mark = "absolute whitespace-nowrap font-['Liberation_Sans',sans-serif] text-[21px] leading-[24px] font-bold text-[#b9bcbf] [text-shadow:1px_1px_1px_#30343a,-1px_-1px_0_#ffffff80]";

const docs = [
  { t: "KT1-006 - PHỐI CẢNH MẶT BẰN...", w: "w-[115px]" }, { t: "KC-02 - GHI CHÚ CHUNG - 1", w: "w-[97px]" },
  { t: "KT1-015 - MẶT BẰNG LÁT SÀN TẦ...", w: "w-[112px]" }, { t: "KT1-004 - PHỐI CẢNH MẶT BẰNG...", w: "w-[112px]" },
];

function Workspace() {
  return (
    <main className="flex min-w-0 flex-1 flex-col">
      <nav className="flex h-[11px] shrink-0 items-center bg-[#465163] text-[#c3c9d1]">
        {docs.map((d, i) => (
          <button key={d.t} className={"flex h-full items-center gap-[3px] pl-[2px] whitespace-nowrap " + d.w + (i === 0 ? " bg-[#222933] font-bold text-white" : " font-['Liberation_Sans',sans-serif] text-[5px]")}>
            <svg viewBox="0 0 8 6" className="h-[6px] w-[8px] shrink-0" fill={i ? "#939ca8" : "#e3e6ea"}><path d="M0 0h5l3 3v3H0z" /></svg>
            <span className="flex-1 text-left">{d.t}</span>{i === 0 && <X className="mr-[2px] h-[6px] w-[6px]" strokeWidth={3} />}
          </button>
        ))}
        <Caret className="mr-[3px] ml-auto" />
      </nav>
      <div className="flex min-h-0 flex-1">
        <div className="relative flex min-w-0 flex-1 items-center justify-center bg-white pl-[7px]">
          <div className="flex border border-[#d9a9ae] p-[3px]">
            <div className="flex h-[468px] w-[665px] border border-[#333] font-['Liberation_Sans',sans-serif]">
              <div className="relative min-w-0 flex-1">
                <HousePlan />
                <p className="absolute top-[357px] left-[240px] text-[12px] leading-[16px] font-bold whitespace-nowrap text-[#1b1b1b]">PHỐI CẢNH MẶT BẰNG TẦNG 2</p>
                <span className={mark + " top-[331px] left-[157px]"}>BanVeNhaDep.vn</span>
              </div>
              <TitleBlock />
            </div>
          </div>
          <div className="absolute top-0 right-0 flex h-[48px] w-[16px] flex-col items-center justify-between border border-[#d5d8db] bg-[#f0f1f2] pt-[8px] pb-[4px] text-[#9aa1a8]">
            <svg viewBox="0 0 12 12" className="h-[11px] w-[11px]" fill="none" stroke="#9aa1a8"><circle cx="6" cy="6" r="5" /><path d="M3 8V4h3q2 1 0 2H3M8 4h2v4H8" strokeWidth=".8" /></svg>
            <Caret /><svg viewBox="0 0 10 10" className="h-[9px] w-[9px]" fill="none" stroke="#9aa1a8"><path d="M1 1h6v6H1z" /><circle cx="6" cy="6" r="2" fill="#a7cf8a" /><path d="M8 8l2 2" /></svg><Caret />
          </div>
          <span className={mark + " bottom-0 left-[251px] translate-y-[2px]"}>Bản quyền © BanVeNhaDep.vn</span>
        </div>
        <div className="flex w-[9px] shrink-0 flex-col items-center justify-between bg-[#2f3743] py-[1px] text-[#aab1ba]">
          <ChevronUp className="h-[6px] w-[6px]" /><span className="h-[8px] w-[2px] bg-[#566273]" /><ChevronDown className="h-[6px] w-[6px]" />
        </div>
      </div>
      <div className="flex h-[9px] shrink-0 items-center bg-[#2c3440] text-[#c3c9d1]">
        <svg viewBox="0 0 10 6" className="mx-[2px] h-[6px] w-[8px]" fill="none" stroke="#c3c9d1"><circle cx="3" cy="4" r="1.500" /><circle cx="7" cy="4" r="1.500" /><path d="M2 3l2-2M7 3l2-2" /></svg>
        <span className="ml-[1px] flex h-full w-[9px] items-center justify-center bg-[#27434f]"><svg viewBox="0 0 6 8" className="h-[7px] w-[5px]" fill="#8fe0e0"><circle cx="3" cy="3" r="2.500" /><path d="M2 5h2v3H2z" /></svg></span>
        <ChevronLeft className="ml-[1px] h-[6px] w-[6px]" strokeWidth={3} />
        <span className="mx-auto h-[2px] w-[8px] bg-[#566273]" /><ChevronRight className="mr-[10px] h-[6px] w-[6px]" strokeWidth={3} />
      </div>
    </main>
  );
}

function StatusBar() {
  return (
    <footer className="flex h-[14px] shrink-0 items-center border-b-2 border-[#20262f] bg-[#3b4453] pl-[1px] font-['Open_Sans',sans-serif] text-[5px] text-[#dde1e6]">
      <span className="w-[749px]">Click to select, TAB for alternates, CTRL adds, SHIFT unselects.</span>
      <svg viewBox="0 0 8 8" className="h-[8px] w-[8px]"><path d="M0 2l3-2 4 2v4L4 8 0 6z" fill="#6fae9b" /><path d="M4 2h3v4H4z" fill="#d9dde2" /></svg>
      <span className="ml-[3px] flex h-[9px] w-[97px] items-center justify-end border-b border-[#566273] pr-[2px]"><Caret className="opacity-40" /></span>
      <span className="ml-[3px] flex w-[20px] items-center text-[#8b94a0]"><svg viewBox="0 0 8 8" className="h-[7px] w-[7px]" fill="#8b94a0"><path d="M2 0h4v4L5 6H0l2-2zM1 7h6v1H1z" /></svg>:0</span>
      <svg viewBox="0 0 8 6" className="h-[6px] w-[8px]"><path d="M0 0h8v6H0z" fill="#e3e6ea" /><path d="M1 2h6M1 4h6" stroke="#59626f" strokeWidth=".7" /></svg>
      <svg viewBox="0 0 8 6" className="ml-[4px] h-[6px] w-[8px]"><path d="M0 0h8v6H0z" fill="#9aa2ad" /><path d="M1 2h6M1 4h6" stroke="#59626f" strokeWidth=".7" /></svg>
      <label className="ml-[3px] flex h-[9px] w-[97px] items-center border-b border-[#566273] pr-[2px] text-[#77818e]">
        <select aria-label="Design option" className="w-full appearance-none bg-transparent pl-[1px] outline-none"><option>Main Model</option></select><Caret />
      </label>
      <div className="mr-[18px] ml-auto flex items-center gap-[3px]">
        {["#c99a8d", "#8cc4ee", "#e3e6ea", "#8cc4ee", "#e3e6ea"].map((c, i) => (
          <svg key={i} viewBox="0 0 8 8" className="h-[8px] w-[8px]"><path d={["M0 1h6M0 3h4", "M0 3l6-3v5H2z", "M2 0v4M0 2h5", "M0 1h5v7H0z", "M0 3h6M3 0v6"][i]} stroke={c} fill={i % 2 ? c : "none"} strokeWidth="1.200" /><path d="M4 2v5l1-1 1 2 1-.500-1-2h2z" fill="#f1f3f5" /></svg>
        ))}
        <Lasso className="h-[8px] w-[8px] opacity-60" />
        <span className="flex items-center"><svg viewBox="0 0 8 8" className="h-[7px] w-[7px]" fill="#e3e6ea"><path d="M0 0h8L5 4v4H3V4z" /></svg>:0</span>
      </div>
    </footer>
  );
}

export default function App() {
  return (
    <div className="relative flex h-screen min-h-[655px] flex-col overflow-hidden bg-[#3b4453] font-['Lato','Open_Sans',sans-serif] text-[6px] leading-[8px]">
      <TitleBar />
      <nav className="flex h-[11px] shrink-0 items-stretch bg-[#222933] whitespace-nowrap text-[#c9ced5]">
        <button className="w-[22px] bg-[#2a7fb4] text-white">File</button>
        <button className="ml-[6px] w-[34px] bg-[#3b4453] text-white">Architecture</button>
        <div className="ml-[5px] flex w-[382px] items-center justify-between">{menuTabs.map((t) => <button key={t}>{t}</button>)}</div>
        <button className="my-[1px] ml-[5px] w-[23px] bg-[#f2c316] text-white">ATool</button>
        <button className="ml-[5px]">Modify</button>
        <span className="ml-[15px] flex items-center gap-[3px]"><svg viewBox="0 0 6 4" className="h-[4px] w-[6px]"><path d="M0 0h6v4H0z" fill="#e3e6ea" /><circle cx="3" cy="2" r="1" fill="#222933" /></svg><Caret /></span>
      </nav>
      <Ribbon />
      <div className="h-[12px] shrink-0" />
      <div className="flex min-h-0 flex-1"><Properties /><Workspace /><Browser /></div>
      <StatusBar />
      <span className={mark + " top-[66px] left-[627px]"}>BanVeNhaDep.vn</span>
      <Brand />
    </div>
  );
}
